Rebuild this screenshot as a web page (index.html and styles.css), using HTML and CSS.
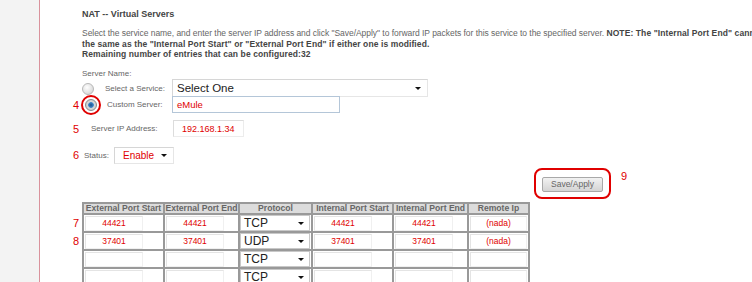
FILE: index.html
```html
<!DOCTYPE html>
<html>
<head>
<meta charset="utf-8">
<link rel="stylesheet" href="styles.css">
</head>
<body>
<div class="page">
  <div class="side"></div>
  <div class="main">
    <div class="title">NAT -- Virtual Servers</div>
    <p class="desc">Select the service name, and enter the server IP address and click "Save/Apply" to forward IP packets for this service to the specified server. <b>NOTE: The "Internal Port End" cannot be changed. It is</b><br><b>the same as the "Internal Port Start" or "External Port End" if either one is modified.</b><br><b>Remaining number of entries that can be configured:32</b></p>
    <div class="lbl sname">Server Name:</div>
    <div class="row r-service">
      <span class="radio"></span>
      <span class="lbl l-service">Select a Service:</span>
      <div class="sel sel-big"><span class="seltext">Select One</span><span class="arrow"></span></div>
    </div>
    <div class="row r-custom">
      <span class="num">4</span>
      <span class="ring-radio"><span class="radio checked"></span></span>
      <span class="lbl l-custom">Custom Server:</span>
      <div class="inp inp-custom">eMule</div>
    </div>
    <div class="row r-ip">
      <span class="num">5</span>
      <span class="lbl l-ip">Server IP Address:</span>
      <div class="inp inp-ip">192.168.1.34</div>
    </div>
    <div class="row r-status">
      <span class="num">6</span>
      <span class="lbl l-status">Status:</span>
      <div class="sel sel-status"><span class="seltext red">Enable</span><span class="arrow"></span></div>
    </div>
    <div class="save-row">
      <span class="ring-btn"><span class="btn">Save/Apply</span></span>
      <span class="num9">9</span>
    </div>
    <table class="vs">
      <tr>
        <th class="c1">External Port Start</th>
        <th class="c2">External Port End</th>
        <th class="c3">Protocol</th>
        <th class="c4">Internal Port Start</th>
        <th class="c5">Internal Port End</th>
        <th class="c6">Remote Ip</th>
      </tr>
      <tr>
        <td><span class="num rn">7</span><div class="cin">44421</div></td>
        <td><div class="cin">44421</div></td>
        <td><div class="psel">TCP<span class="arrow"></span></div></td>
        <td><div class="cin">44421</div></td>
        <td><div class="cin">44421</div></td>
        <td><div class="cin wide">(nada)</div></td>
      </tr>
      <tr>
        <td><span class="num rn">8</span><div class="cin">37401</div></td>
        <td><div class="cin">37401</div></td>
        <td><div class="psel">UDP<span class="arrow"></span></div></td>
        <td><div class="cin">37401</div></td>
        <td><div class="cin">37401</div></td>
        <td><div class="cin wide">(nada)</div></td>
      </tr>
      <tr>
        <td><div class="cin"></div></td>
        <td><div class="cin"></div></td>
        <td><div class="psel">TCP<span class="arrow"></span></div></td>
        <td><div class="cin"></div></td>
        <td><div class="cin"></div></td>
        <td><div class="cin wide"></div></td>
      </tr>
      <tr>
        <td><div class="cin"></div></td>
        <td><div class="cin"></div></td>
        <td><div class="psel">TCP<span class="arrow"></span></div></td>
        <td><div class="cin"></div></td>
        <td><div class="cin"></div></td>
        <td><div class="cin wide"></div></td>
      </tr>
    </table>
  </div>
</div>
</body>
</html>
```

FILE: styles.css
```css
html, body {
  margin: 0;
  padding: 0;
  background: #ffffff;
  overflow: hidden;
}
body {
  width: 752px;
  height: 282px;
  font-family: "Liberation Sans", Arial, sans-serif;
  font-size: 8px;
  color: #666;
}
.page {
  display: flex;
  height: 282px;
}
.side {
  width: 39px;
  flex: none;
  background: #f3f3f3;
  border-right: 1px solid #d9929c;
}
.main {
  flex: 1;
  padding-left: 42px;
  min-width: 0;
  white-space: nowrap;
}
.title {
  margin-top: 9px;
  font-weight: bold;
  color: #444;
  font-size: 9px;
  line-height: 11px;
}
.desc {
  margin: 8px 0 0 0;
  font-size: 8.5px;
  letter-spacing: -0.04px;
  line-height: 10.5px;
  color: #666;
}
.desc b {
  color: #444;
  letter-spacing: 0.1px;
}
.sname {
  margin-top: 9px;
  line-height: 10px;
}
.lbl {
  color: #666;
}
.row {
  display: flex;
  align-items: center;
  position: relative;
}
.r-service {
  height: 16px;
  margin-top: 2px;
}
.r-custom {
  height: 16px;
}
.r-ip {
  height: 16px;
  margin-top: 8px;
}
.r-status {
  height: 17px;
  margin-top: 10px;
}
.num {
  position: absolute;
  left: -9px;
  color: #e00000;
  font-size: 11px;
  font-family: "Liberation Sans", Arial, sans-serif;
}
.radio {
  display: inline-block;
  width: 10px;
  height: 10px;
  border-radius: 50%;
  border: 1px solid #b8b8b8;
  background: radial-gradient(circle at 40% 35%, #ffffff 0%, #dcdcdc 70%, #c8c8c8 100%);
  flex: none;
}
.radio.checked {
  background: radial-gradient(circle at 50% 50%, #1a4f8a 0%, #3c86c8 35%, #d8d8d8 45%, #c4c4c4 100%);
  border-color: #8a8a8a;
}
.l-service {
  margin-left: 11px;
  width: 67px;
}
.ring-radio {
  display: flex;
  align-items: center;
  justify-content: center;
  width: 16px;
  height: 16px;
  border: 2px solid #e00000;
  border-radius: 50%;
  margin-left: -1px;
  flex: none;
}
.l-custom {
  margin-left: 6px;
  width: 65px;
}
.sel {
  position: relative;
  display: flex;
  align-items: center;
  box-sizing: border-box;
  background: #fff;
  border: 1px solid #d6d6d6;
  border-right-color: #e6e6e6;
  border-bottom-color: #e6e6e6;
}
.sel-big {
  width: 256px;
  height: 18px;
  flex: none;
  margin-top: -2px;
}
.seltext {
  font-size: 11.5px;
  color: #222;
  padding-left: 4px;
}
.arrow {
  position: absolute;
  right: 6px;
  top: 50%;
  margin-top: -1px;
  width: 0;
  height: 0;
  border-left: 3px solid transparent;
  border-right: 3px solid transparent;
  border-top: 3px solid #111;
}
.inp {
  box-sizing: border-box;
  background: #fff;
  color: #e00000;
  font-family: "Liberation Sans", Arial, sans-serif;
  display: flex;
  align-items: center;
  flex: none;
}
.inp-custom {
  width: 168px;
  height: 17px;
  border: 1px solid #b4c6d8;
  font-size: 9.5px;
  padding-left: 4px;
}
.l-ip {
  margin-left: 9px;
  width: 82px;
}
.inp-ip {
  width: 71px;
  height: 17px;
  border: 1px solid #dcdcdc;
  border-right-color: #ececec;
  border-bottom-color: #ececec;
  font-size: 9px;
  padding-left: 8px;
}
.l-status {
  margin-left: 2px;
  width: 30px;
}
.sel-status {
  width: 60px;
  height: 17px;
  flex: none;
}
.sel-status .seltext {
  font-size: 10px;
  padding-left: 8px;
}
.red {
  color: #e00000 !important;
}
.save-row {
  display: flex;
  align-items: flex-start;
  margin-top: 4px;
  padding-left: 452px;
  height: 32px;
}
.ring-btn {
  display: flex;
  align-items: center;
  justify-content: center;
  box-sizing: border-box;
  width: 77px;
  height: 31px;
  border: 2px solid #e00000;
  border-radius: 8px;
}
.btn {
  box-sizing: border-box;
  width: 61px;
  height: 15px;
  margin-top: 2px;
  border: 1px solid #a8a8a8;
  border-radius: 2px;
  background: linear-gradient(#f2f2f2, #d4d4d4);
  color: #666;
  font-size: 8.5px;
  line-height: 13px;
  text-align: center;
}
.num9 {
  color: #e00000;
  font-size: 11px;
  margin-left: 10px;
  margin-top: 2px;
}
table.vs {
  margin-top: 2px;
  width: 448px;
  border-collapse: separate;
  border-spacing: 0;
  border: 1px solid #999;
  table-layout: fixed;
}
table.vs th {
  background: #dcdcdc;
  color: #666;
  font-weight: bold;
  font-size: 8.6px;
  height: 9px;
  line-height: 9px;
  padding: 0;
  border: 1px solid #999;
  overflow: hidden;
  white-space: nowrap;
}
table.vs td {
  border: 1px solid #999;
  padding: 1px 0 0 1px;
  height: 15px;
  vertical-align: top;
  position: relative;
}
.rn {
  left: -11px;
  top: 2px;
}
.c1 { width: 79px; }
.c2 { width: 73px; }
.c3 { width: 71px; }
.c4 { width: 79px; }
.c5 { width: 73px; }
.c6 { width: 59px; }
.cin {
  box-sizing: border-box;
  width: 58px;
  height: 15px;
  border: 1px solid #e4e4e4;
  border-right-color: #f0f0f0;
  border-bottom-color: #f0f0f0;
  background: #fff;
  color: #e00000;
  font-size: 8.5px;
  line-height: 13px;
  text-align: center;
}
.cin.wide {
  width: 57px;
}
.psel {
  position: relative;
  box-sizing: border-box;
  width: 70px;
  height: 16px;
  margin-top: -1px;
  margin-left: -1px;
  border: 1px solid #c8c8c8;
  background: #fff;
  color: #222;
  font-size: 12px;
  line-height: 15px;
  padding-left: 3px;
}
.psel .arrow {
  right: 5px;
}
```
